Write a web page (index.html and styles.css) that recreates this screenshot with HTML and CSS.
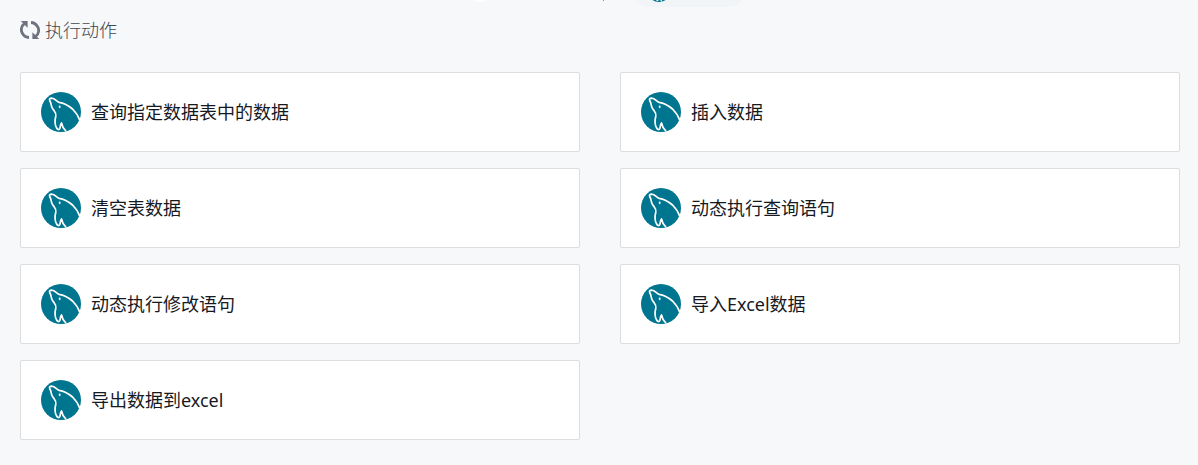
FILE: index.html
```
<!DOCTYPE html>
<html lang="zh-CN">
<head>
<meta charset="utf-8">
<title>执行动作</title>
<link rel="stylesheet" href="styles.css">
</head>
<body>
<svg class="sprite" aria-hidden="true">
  <symbol id="mysql" viewBox="0 0 40 40">
    <circle cx="20" cy="20" r="20" fill="#00758f"/>
    <g fill="none" stroke="#fff" stroke-width="1.7" stroke-linecap="round" stroke-linejoin="round">
      <path d="M38.6 28C37 23 34.500 20 31.500 17C27.500 13.500 23.500 11 18 10.300C15.500 9.500 14.500 6.300 10.300 6.200C8.500 6.300 8 7.600 9 9.200C10.500 11.500 9.800 14 11.500 16.500C13.500 19.500 15.500 20.500 14.800 24C13.800 28 14 33.500 15.800 36.300C16.700 37.800 18.200 38 18.800 36.500C19.400 34.800 19.200 32.500 20.500 31C21 33.500 22.300 36.500 24.600 38.700"/>
    </g>
    <ellipse cx="18.700" cy="14.800" rx="1" ry="1.500" fill="#d5e8ec"/>
  </symbol>
</svg>

<header class="topbar">
  <span class="dot"></span>
  <span class="divider"></span>
  <span class="pill"><svg class="logo" aria-hidden="true"><use href="#mysql"/></svg></span>
</header>

<main class="actions">
  <h2 class="heading">
    <svg class="heading-icon" viewBox="0 0 20 18" aria-hidden="true">
      <g id="half">
        <path d="M.8 0H7.600V6.800Z"/>
        <path class="arc" d="M4.400 2.600C.9 5.200.6 9.500 2.500 12.500C4 15 6.400 16.400 9 16.500"/>
      </g>
      <use href="#half" transform="rotate(180 10 9)"/>
    </svg>
    <span>执行动作</span>
  </h2>
  <ul class="grid">
    <li class="card"><svg class="logo" aria-hidden="true"><use href="#mysql"/></svg><span>查询指定数据表中的数据</span></li>
    <li class="card"><svg class="logo" aria-hidden="true"><use href="#mysql"/></svg><span>插入数据</span></li>
    <li class="card"><svg class="logo" aria-hidden="true"><use href="#mysql"/></svg><span>清空表数据</span></li>
    <li class="card"><svg class="logo" aria-hidden="true"><use href="#mysql"/></svg><span>动态执行查询语句</span></li>
    <li class="card"><svg class="logo" aria-hidden="true"><use href="#mysql"/></svg><span>动态执行修改语句</span></li>
    <li class="card"><svg class="logo" aria-hidden="true"><use href="#mysql"/></svg><span>导入Excel数据</span></li>
    <li class="card"><svg class="logo" aria-hidden="true"><use href="#mysql"/></svg><span>导出数据到excel</span></li>
  </ul>
</main>
</body>
</html>
```
FILE: styles.css
```
* { box-sizing: border-box; }
body {
  margin: 0;
  background: #f7f8fa;
  color: #16191f;
  font-family: "Noto Sans", "Noto Sans CJK SC", sans-serif;
}
.sprite { position: absolute; width: 0; height: 0; }
.topbar {
  display: flex;
  justify-content: center;
  align-items: flex-end;
  height: 7px;
  padding-left: 16px;
  overflow: hidden;
}
.dot {
  width: 24px;
  height: 24px;
  margin: 0 111px 5px 0;
  border-radius: 50%;
  background: #fff;
}
.divider {
  width: 1px;
  height: 16px;
  margin: 0 28px 6px 0;
  background: #8d9096;
}
.pill {
  display: flex;
  align-items: center;
  width: 114px;
  height: 34px;
  padding: 0 15px;
  border-radius: 17px;
  background: #f1f5f8;
}
.pill .logo { width: 24px; height: 24px; }
.actions { padding: 11px 18px 25px 20px; }
.heading {
  display: flex;
  align-items: center;
  gap: 5px;
  margin: 0 0 30px;
  color: #43474f;
  font-size: 18px;
  font-weight: 300;
  line-height: 24px;
}
.heading-icon { width: 20px; height: 18px; fill: #6f7380; }
.arc { fill: none; stroke: #6f7380; stroke-width: 2.8; }
.grid {
  display: grid;
  grid-template-columns: 1fr 1fr;
  gap: 16px 40px;
  margin: 0;
  padding: 0;
  list-style: none;
}
.card {
  display: flex;
  align-items: center;
  gap: 10px;
  padding: 19px 20px;
  border: 1px solid #dcdddf;
  border-radius: 2px;
  background: #fff;
  font-size: 18px;
  line-height: 24px;
}
.logo { flex: none; width: 40px; height: 40px; }
```
